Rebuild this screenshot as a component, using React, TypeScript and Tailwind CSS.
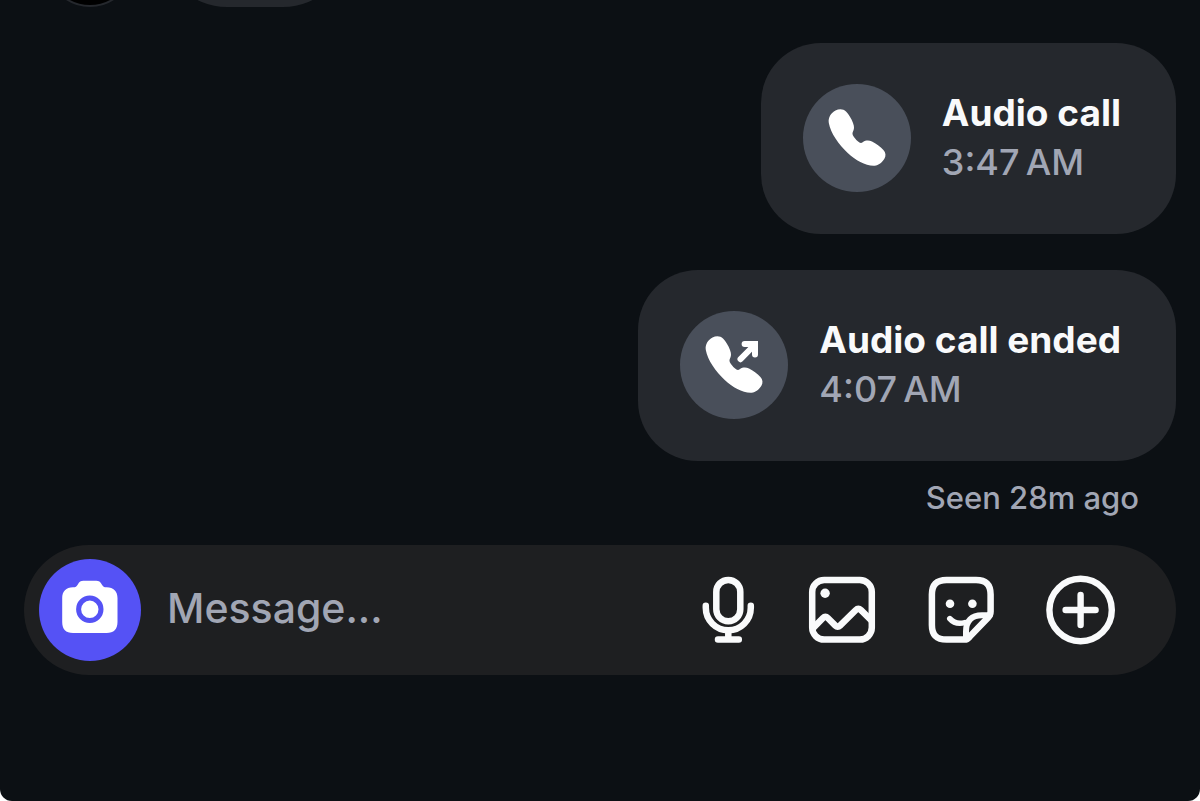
import React, { useState } from 'react';

interface CallCardProps {
  title: string;
  time: string;
  ended?: boolean;
}

const PhoneIcon: React.FC<{ outgoing?: boolean }> = ({ outgoing }) => (
  <svg viewBox="0 0 64 64" className="w-16 h-16" fill="none" aria-hidden="true">
    <path
      d="M10.5 4.6C14 2.6 18.4 2.8 21 5.5C23.6 8 26.6 13 28 17C29.6 21 29.2 23.5 27.8 26C27.2 27.4 27.4 28.8 28.6 30.4C30.4 32.9 32.2 34.9 34.4 36.4C35.8 37.3 36.8 36.8 38 36C40.6 34.2 44 34.2 47 35.4C51 37.2 55.4 40.6 58.4 44C60.8 46.8 61.2 49.6 59.4 52.8C57.2 56.4 53.6 59.5 49.6 59.8C41 60.3 30.6 54.4 23 47.3C13.6 38.3 5.6 27.2 3.8 17C3 11.3 6 7.2 10.5 4.6Z"
      fill="white"
    />
    {outgoing && (
      <>
        <path d="M38.5 26.2L51.5 13" stroke="white" strokeWidth="6" strokeLinecap="round" />
        <path d="M42.6 10.9H53V21.6" stroke="white" strokeWidth="6" strokeLinecap="round" />
      </>
    )}
  </svg>
);

const CameraIcon = () => (
  <svg viewBox="0 0 64 64" className="w-16 h-16" aria-hidden="true">
    <path
      d="M15 9.2C17.6 9.2 18.6 8.4 19.8 6.4C21.2 3.8 22.8 2.8 25.4 2.8H38.2C40.8 2.8 42.4 3.8 43.8 6.4C45 8.4 46 9.2 48.6 9.2C55.6 9.4 59.5 13.4 59.5 20V44C59.5 51.4 55.8 55 48.6 55H15C7.8 55 4.2 51.4 4.2 44V20C4.2 13.4 8 9.4 15 9.2Z"
      fill="white"
    />
    <circle cx="31.8" cy="31.3" r="11.2" fill="white" stroke="#5552f5" strokeWidth="5" />
  </svg>
);

const MicIcon = () => (
  <svg viewBox="0 0 60 72" className="w-[60px] h-[72px]" fill="none" stroke="currentColor" strokeWidth="6.5" strokeLinecap="round" aria-hidden="true">
    <rect x="17.3" y="5.9" width="24" height="41.4" rx="12" />
    <path d="M6.8 31.8V33.8A22.5 22.5 0 0 0 51.8 33.8V31.8" />
    <path d="M29.3 56.5V65.6M19 65.6H39.8" />
  </svg>
);

const ImageIcon = () => (
  <svg viewBox="0 0 72 72" className="w-[72px] h-[72px]" fill="none" stroke="currentColor" strokeWidth="6.5" strokeLinejoin="round" aria-hidden="true">
    <rect x="6.2" y="6" width="59.6" height="59.6" rx="12" />
    <circle cx="19.1" cy="19.3" r="4.7" fill="currentColor" stroke="none" />
    <path d="M6.5 54.6L17 44Q19.4 41.6 21.8 44L29.4 51.6Q31.7 53.9 34 51.6L49.6 36.2Q52.3 33.6 55 36.2L65.6 46.6" />
  </svg>
);

const StickerIcon = () => (
  <svg viewBox="0 0 72 72" className="w-[72px] h-[72px]" fill="none" stroke="currentColor" strokeWidth="6.5" strokeLinecap="round" strokeLinejoin="round" aria-hidden="true">
    <path d="M39.5 65.6H21.6C11.4 65.6 6.9 60.8 6.9 51V20.6C6.9 10.8 11.4 6 21.6 6H51C61.2 6 65.6 10.8 65.6 20.6V37.6C65.6 40.2 64.8 41.8 63 43.6L44.8 62.6C43.2 64.6 41.8 65.6 39.5 65.6Z" />
    <path d="M41 64.5V57.4C41 47 46.6 41.2 57 41.2H64.8" strokeWidth="6" />
    <path d="M24.8 44.6C28.4 48.8 33.4 50.2 39.8 48.6" strokeWidth="5.6" />
    <circle cx="25" cy="29.7" r="4.3" fill="currentColor" stroke="none" />
    <circle cx="47.4" cy="29.7" r="4.3" fill="currentColor" stroke="none" />
  </svg>
);

const PlusIcon = () => (
  <svg viewBox="0 0 72 72" className="w-[72px] h-[72px]" fill="none" stroke="currentColor" strokeWidth="6.4" strokeLinecap="round" aria-hidden="true">
    <circle cx="36.6" cy="36" r="31.2" />
    <path d="M36.6 21V51M21.6 36H51.6" />
  </svg>
);

const CallCard: React.FC<CallCardProps> = ({ title, time, ended }) => (
  <div className="flex items-start rounded-[60px] bg-[#25282d] pt-[41px] pb-[42px] pl-[42px] pr-[55px]">
    <div className="w-[108px] h-[108px] shrink-0 rounded-full bg-[#494f5a] flex items-center justify-center">
      <PhoneIcon outgoing={ended} />
    </div>
    <div className="ml-[31px] mt-1">
      <h2 className="text-[37px] leading-[50px] font-bold text-[#f9fafb] whitespace-nowrap">{title}</h2>
      <p className="text-[36px] leading-[48px] font-medium text-[#a1a6b4] whitespace-nowrap">{time}</p>
    </div>
  </div>
);

const actions = [
  { label: 'Record voice message', Icon: MicIcon },
  { label: 'Choose photo', Icon: ImageIcon },
  { label: 'Stickers', Icon: StickerIcon },
  { label: 'More', Icon: PlusIcon },
];

export default function App() {
  const [message, setMessage] = useState('');

  return (
    <div className="min-h-screen bg-white">
      <main className="min-h-screen flex flex-col rounded-b-xl bg-[#0c1014] px-6 font-['Inter','Liberation_Sans',sans-serif]">
        {/* Previous message, scrolled almost out of view */}
        <div className="h-[7px] overflow-hidden flex items-end pl-[22px]">
          <div className="w-[88px] h-[88px] shrink-0 rounded-full bg-black border-2 border-[#25282d]" />
          <div className="ml-[27px] w-[188px] h-[132px] shrink-0 rounded-full bg-[#25282d]" />
        </div>

        {/* Calls */}
        <div className="mt-9 flex flex-col items-end gap-9">
          <CallCard title="Audio call" time={'3:47\u202fAM'} />
          <CallCard title="Audio call ended" time={'4:07\u202fAM'} ended />
        </div>
        <p className="mt-[17px] mr-[37px] text-right text-[31px] leading-10 font-medium text-[#a1a6b4]">
          Seen 28m ago
        </p>

        {/* Composer */}
        <form
          onSubmit={(e) => e.preventDefault()}
          className="mt-[27px] h-[130px] shrink-0 flex items-center rounded-full bg-[#1e1f21] pl-[15px] pr-[60px]"
        >
          <button
            type="button"
            aria-label="Open camera"
            className="w-[102px] h-[102px] shrink-0 rounded-full bg-[#5552f5] flex items-center justify-center"
          >
            <CameraIcon />
          </button>
          <input
            type="text"
            aria-label="Message"
            placeholder="Message..."
            value={message}
            onChange={(e) => setMessage(e.target.value)}
            className="ml-[26px] pb-[3px] flex-1 min-w-0 bg-transparent text-[41px] font-medium text-white placeholder:text-[#a1a6b4] outline-none"
          />
          <div className="flex items-center gap-[47px] text-[#f9fafb]">
            {actions.map(({ label, Icon }) => (
              <button key={label} type="button" aria-label={label}>
                <Icon />
              </button>
            ))}
          </div>
        </form>
      </main>
    </div>
  );
}
